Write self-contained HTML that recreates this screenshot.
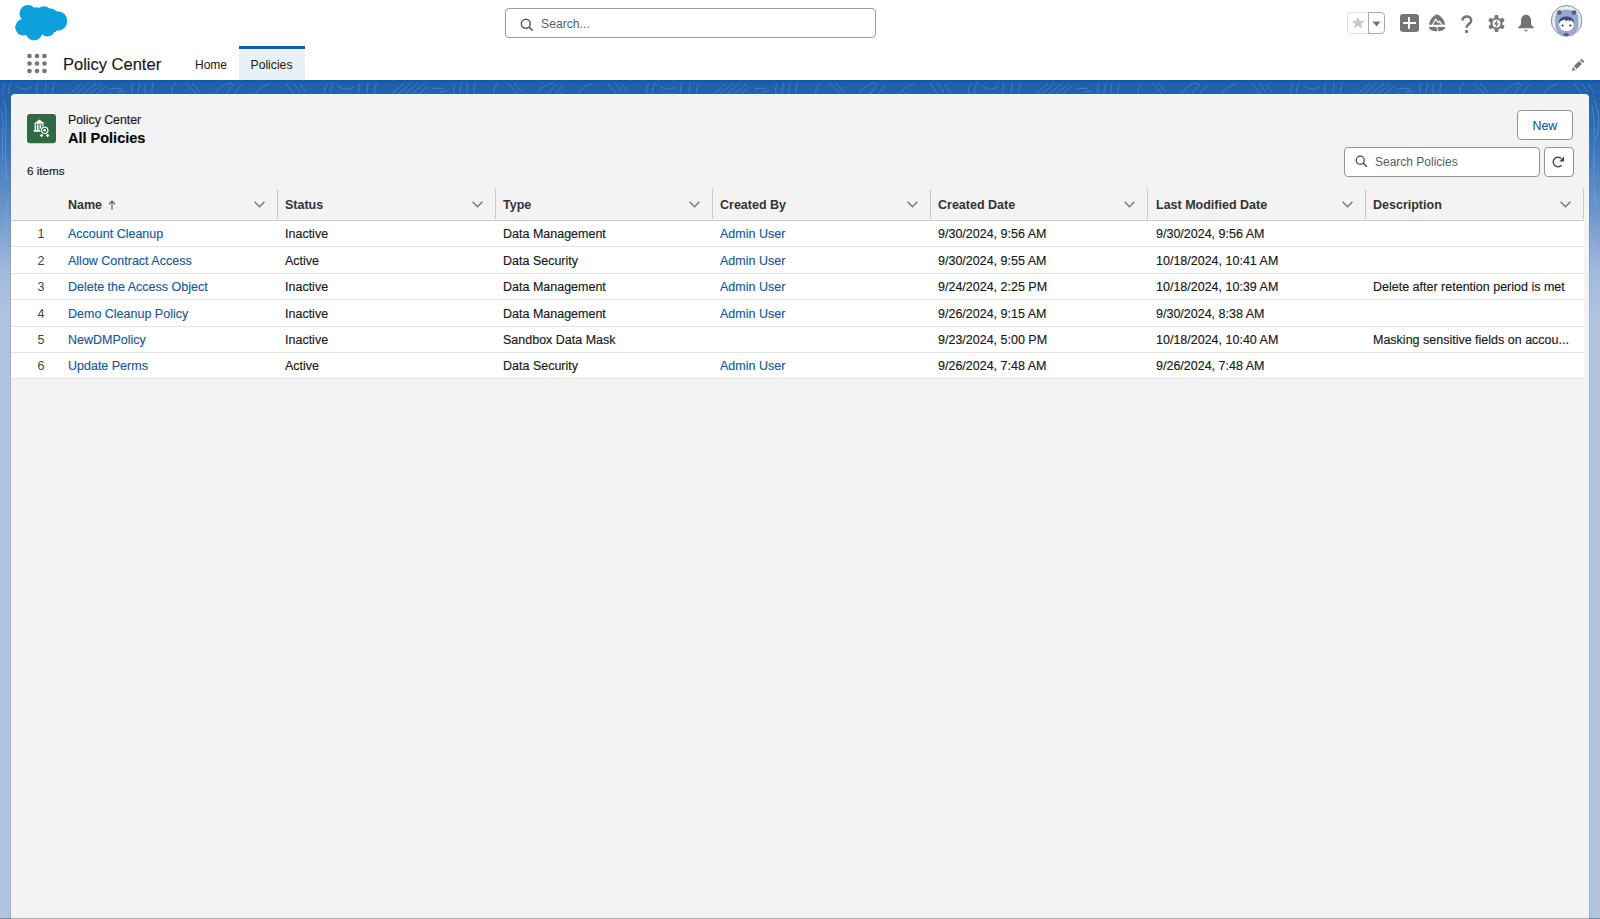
<!DOCTYPE html><html><head><meta charset="utf-8"><style>*{box-sizing:border-box;margin:0;padding:0}
html,body{width:1600px;height:919px;overflow:hidden}
body{font-family:"Liberation Sans",sans-serif;color:#181818;background:#b0c4df;position:relative;font-size:12.5px}
.abs{position:absolute}
#hdr{position:absolute;left:0;top:0;width:1600px;height:80px;background:#fff}
#band{position:absolute;left:0;top:80px;width:1600px;height:839px;background:linear-gradient(180deg,#1d60aa 0px,#2464ac 25px,#3b74b8 65px,#6a95cb 130px,#a0b8da 190px,#b0c4df 235px)}
#band .topline{position:absolute;left:0;top:0;width:1600px;height:2px;background:#0e5cae}
#card{position:absolute;left:11px;top:94px;width:1578px;height:830px;background:#f3f3f3;border-radius:4px 4px 0 0;box-shadow:0 0 0 1px rgba(100,115,130,0.22)}
.t{position:absolute;white-space:nowrap;line-height:13px;height:13px;-webkit-text-stroke:0.15px currentColor}
.link{color:#1a5896}
.cell{color:#181818}
.num{color:#444;text-align:right;-webkit-text-stroke:0}
.ns{-webkit-text-stroke:0}
.hd{font-weight:bold;color:#333;font-size:12.5px;-webkit-text-stroke:0}
.thead{position:absolute;left:11px;top:189px;width:1573px;height:31px;background:#f3f3f3}
.hline{position:absolute;left:11px;top:220px;width:1573px;height:1px;background:#c9c9c9}
.divider{position:absolute;top:189px;width:1px;height:30px;background:#c9c9c9}
.chev{position:absolute}
.sortarrow{position:absolute;left:107.5px;top:200px}
.row{position:absolute;left:11px;width:1573px;height:26.3px;background:#fff;border-bottom:1px solid #e5e5e5}
.box{position:absolute;background:#fff;border:1px solid #939393;border-radius:4px}

#bottomline{position:absolute;left:0;top:918px;width:1600px;height:1px;background:rgba(0,0,0,0.28)}
</style></head><body>
<div id="hdr">
  <!-- cloud logo -->
  <svg class="abs" style="left:0;top:0" width="80" height="46" viewBox="0 0 80 46">
    <g fill="#0da0dc">
      <circle cx="28" cy="13.5" r="8.5"/>
      <circle cx="44" cy="13.5" r="7.3"/>
      <circle cx="57.5" cy="21" r="9.8"/>
      <circle cx="23.5" cy="27.3" r="8.3"/>
      <circle cx="34" cy="32" r="8.5"/>
      <circle cx="47.5" cy="29" r="7.5"/>
      <rect x="22" y="14" width="34" height="18"/><circle cx="36.5" cy="14.5" r="7.2"/><circle cx="50.5" cy="15.5" r="7"/>
    </g>
  </svg>
  <!-- search -->
  <div class="box" style="left:505px;top:8px;width:371px;height:30px;border-color:#9a9a9a"></div>
  <svg class="abs" style="left:520px;top:18px" width="14" height="14" viewBox="0 0 14 14"><circle cx="5.8" cy="5.8" r="4.5" fill="none" stroke="#5c5c5c" stroke-width="1.5"/><path d="M9.1 9.1L12.8 12.8" stroke="#5c5c5c" stroke-width="1.6"/></svg>
  <div class="t ns" style="left:541px;top:18px;font-size:12.2px;color:#5c5c5c">Search...</div>
  <!-- favorites -->
  <div class="abs" style="left:1347px;top:12px;width:22px;height:22px;border:1px solid #e0e0e0;border-right:none;border-radius:4px 0 0 4px;background:#fff"></div>
  <div class="abs" style="left:1368px;top:12px;width:17px;height:22px;border:1px solid #aaa;border-radius:0 4px 4px 0;background:#fff"></div>
  <svg class="abs" style="left:1351px;top:16px" width="14" height="14" viewBox="0 0 14 14"><path d="M7 0.6L8.9 5H13.5L9.8 7.9L11.2 12.6L7 9.8L2.8 12.6L4.2 7.9L0.5 5H5.1Z" fill="#c9c9c9"/></svg>
  <svg class="abs" style="left:1372px;top:21px" width="9" height="6" viewBox="0 0 9 6"><path d="M0.5 0.5H8.5L4.5 5.5Z" fill="#747474"/></svg>
  <!-- plus -->
  <div class="abs" style="left:1400px;top:14px;width:18.5px;height:18px;background:#747474;border-radius:3px"></div>
  <div class="abs" style="left:1403px;top:22.2px;width:12.5px;height:1.7px;background:#fff"></div>
  <div class="abs" style="left:1408.4px;top:16.8px;width:1.7px;height:12.4px;background:#fff"></div>
  <!-- trailhead -->
  <svg class="abs" style="left:1428px;top:14px" width="19" height="18" viewBox="0 0 19 18">
    <path d="M9 0.6C6.3 0.6 1.3 5.8 1 10.8H17C16.7 5.8 11.7 0.6 9 0.6Z" fill="#767676"/>
    <path d="M0.8 13.1H17.3C17.1 15.8 13.5 17.5 9 17.5C4.5 17.5 1 15.8 0.8 13.1Z" fill="#767676"/>
    <path d="M4.3 11.2L7.7 5.3L10.3 8.6L11.6 7.3L14.5 11.2" fill="none" stroke="#fff" stroke-width="1.2"/>
    <path d="M8.4 12.8L9.9 15.2L9.1 17.8" fill="none" stroke="#fff" stroke-width="1"/>
  </svg>
  <!-- help -->
  <svg class="abs" style="left:1460px;top:14.7px" width="14" height="19" viewBox="0 0 14 19"><path d="M2.3 5.4C2.8 3 4.6 1.6 6.9 1.6C9.5 1.6 11.2 3.3 11.2 5.5C11.2 8.1 8.5 8.9 7.3 10.6C6.8 11.3 6.6 12 6.6 12.8" fill="none" stroke="#767676" stroke-width="2.5"/><rect x="5.1" y="15.1" width="3" height="2.8" rx="0.6" fill="#767676"/></svg>
  <!-- gear -->
  <svg class="abs" style="left:1488px;top:15px" width="17" height="17" viewBox="0 0 17 17">
    <g fill="#767676"><circle cx="8.5" cy="8.5" r="6"/>
    <rect x="6.6" y="0" width="3.8" height="4" rx="1"/><rect x="6.6" y="13" width="3.8" height="4" rx="1"/>
    <rect x="6.6" y="0" width="3.8" height="4" rx="1" transform="rotate(60 8.5 8.5)"/><rect x="6.6" y="13" width="3.8" height="4" rx="1" transform="rotate(60 8.5 8.5)"/>
    <rect x="6.6" y="0" width="3.8" height="4" rx="1" transform="rotate(120 8.5 8.5)"/><rect x="6.6" y="13" width="3.8" height="4" rx="1" transform="rotate(120 8.5 8.5)"/></g>
    <circle cx="8.5" cy="8.5" r="3.9" fill="#fff"/>
    <path d="M9.3 5.6L7.1 8.9H9.6L7.8 11.5" fill="none" stroke="#767676" stroke-width="1.3"/>
  </svg>
  <!-- bell -->
  <svg class="abs" style="left:1517px;top:14px" width="18" height="18" viewBox="0 0 18 18"><path d="M9 0.8C5.8 0.8 4 3.3 4 6.5V10.5L1.2 13.2V14.2H16.8V13.2L14 10.5V6.5C14 3.3 12.2 0.8 9 0.8Z" fill="#747474"/><rect x="7.5" y="15.8" width="3" height="1.4" fill="#747474"/></svg>
  <!-- avatar -->
  <svg class="abs" style="left:1550px;top:4px" width="34" height="34" viewBox="0 0 34 34">
    <circle cx="16.6" cy="16.7" r="15.3" fill="#e6eaf5" stroke="#8c9099" stroke-width="1"/>
    <path d="M5.2 14C5.2 8.5 9.5 5.8 16.6 5.8C23.7 5.8 28.4 8.5 28.4 14V20C28.4 26 25 30 21 32.3H12.2C8.2 30 5.2 26 5.2 20Z" fill="#9aa8ca"/>
    <circle cx="9.3" cy="8.6" r="2.3" fill="#4d5d82"/><circle cx="24" cy="8.6" r="2.3" fill="#4d5d82"/>
    <ellipse cx="16.4" cy="20.6" rx="7.4" ry="6.4" fill="#fff"/>
    <path d="M8.8 19.5C8.6 15 11.5 12.4 16.4 12.4C21.3 12.4 24.2 15 24 19.5C23 17.5 22 16.5 20.5 16.2L19.5 17.8L18.2 15.8L16 17.5L15 15.5C12.5 16 10 17 8.8 19.5Z" fill="#3a4b72"/>
    <circle cx="12.6" cy="21.4" r="1" fill="#222"/><circle cx="20.4" cy="21.4" r="1" fill="#222"/>
    <ellipse cx="16.2" cy="30.6" rx="2.8" ry="1.7" fill="#4d5d82"/>
  </svg>
  <!-- nav row -->
  <svg class="abs" style="left:26px;top:53px" width="22" height="22" viewBox="0 0 22 22"><g fill="#747474">
    <circle cx="3.5" cy="3" r="2.3"/><circle cx="11" cy="3" r="2.3"/><circle cx="18.5" cy="3" r="2.3"/>
    <circle cx="3.5" cy="10.5" r="2.3"/><circle cx="11" cy="10.5" r="2.3"/><circle cx="18.5" cy="10.5" r="2.3"/>
    <circle cx="3.5" cy="18" r="2.3"/><circle cx="11" cy="18" r="2.3"/><circle cx="18.5" cy="18" r="2.3"/></g></svg>
  <div class="t" style="left:63px;top:56px;font-size:16.5px;line-height:17px;height:17px;color:#181818">Policy Center</div>
  <div class="t ns" style="left:195px;top:58.5px;font-size:12px;color:#181818">Home</div>
  <div class="abs" style="left:238.5px;top:46px;width:66px;height:34px;background:#eaf0f8;border-top:3px solid #0b5cab"></div>
  <div class="t ns" style="left:250.5px;top:58.5px;font-size:12.2px;color:#181818">Policies</div>
  <svg class="abs" style="left:1571px;top:58px" width="14" height="14" viewBox="0 0 14 14"><g fill="#747474"><path d="M0.9 12.9L1.9 9.1L4.8 12Z"/><path d="M2.8 8.2L8 3L10.9 5.9L5.7 11.1Z"/><path d="M8.9 2.1L10.3 0.7L13.2 3.6L11.8 5Z"/></g></svg>
</div>
<div id="band"><div class="topline"></div>
<svg style="position:absolute;left:0;top:0" width="1600" height="320" viewBox="0 0 1600 320" fill="none" stroke="#9cc0ee" stroke-opacity="0.3" stroke-width="1">
<g transform="translate(0 0)">
<path d="M3 14C2 10 3 6 6 3M9 14C8 10 9 6 12 2"/>
<path d="M15 5C20 10 26 10 32 7"/>
<path d="M37 14C36 10 37 6 38 3M45 14C45 10 46 6 46 3M53 14C52 10 53 6 55 3"/>
<path d="M70 14L82 3M76 14L89 3M83 14L96 3M90 14L102 4M97 14L106 6"/>
<path d="M110 9C114 8 118 8 122 9M118 12L125 11"/>
<path d="M132 14C131 10 132 6 133 3M138 14C138 10 139 6 140 3M145 14C145 10 145 6 146 3M152 14C152 10 152 6 153 3"/>
<path d="M172 14C171 10 173 6 176 3"/>
<path d="M186 3L196 14M192 3L200 12"/>
<path d="M215 14C218 8 224 4 232 3M226 14L234 4M234 14L241 5"/>
<path d="M256 14C258 10 262 6 270 4"/>
<path d="M286 3L294 14M293 3L300 12M300 4L306 12"/>
</g><g transform="translate(322 0)">
<path d="M3 14C2 10 3 6 6 3M9 14C8 10 9 6 12 2"/>
<path d="M15 5C20 10 26 10 32 7"/>
<path d="M37 14C36 10 37 6 38 3M45 14C45 10 46 6 46 3M53 14C52 10 53 6 55 3"/>
<path d="M70 14L82 3M76 14L89 3M83 14L96 3M90 14L102 4M97 14L106 6"/>
<path d="M110 9C114 8 118 8 122 9M118 12L125 11"/>
<path d="M132 14C131 10 132 6 133 3M138 14C138 10 139 6 140 3M145 14C145 10 145 6 146 3M152 14C152 10 152 6 153 3"/>
<path d="M172 14C171 10 173 6 176 3"/>
<path d="M186 3L196 14M192 3L200 12"/>
<path d="M215 14C218 8 224 4 232 3M226 14L234 4M234 14L241 5"/>
<path d="M256 14C258 10 262 6 270 4"/>
<path d="M286 3L294 14M293 3L300 12M300 4L306 12"/>
</g><g transform="translate(644 0)">
<path d="M3 14C2 10 3 6 6 3M9 14C8 10 9 6 12 2"/>
<path d="M15 5C20 10 26 10 32 7"/>
<path d="M37 14C36 10 37 6 38 3M45 14C45 10 46 6 46 3M53 14C52 10 53 6 55 3"/>
<path d="M70 14L82 3M76 14L89 3M83 14L96 3M90 14L102 4M97 14L106 6"/>
<path d="M110 9C114 8 118 8 122 9M118 12L125 11"/>
<path d="M132 14C131 10 132 6 133 3M138 14C138 10 139 6 140 3M145 14C145 10 145 6 146 3M152 14C152 10 152 6 153 3"/>
<path d="M172 14C171 10 173 6 176 3"/>
<path d="M186 3L196 14M192 3L200 12"/>
<path d="M215 14C218 8 224 4 232 3M226 14L234 4M234 14L241 5"/>
<path d="M256 14C258 10 262 6 270 4"/>
<path d="M286 3L294 14M293 3L300 12M300 4L306 12"/>
</g><g transform="translate(966 0)">
<path d="M3 14C2 10 3 6 6 3M9 14C8 10 9 6 12 2"/>
<path d="M15 5C20 10 26 10 32 7"/>
<path d="M37 14C36 10 37 6 38 3M45 14C45 10 46 6 46 3M53 14C52 10 53 6 55 3"/>
<path d="M70 14L82 3M76 14L89 3M83 14L96 3M90 14L102 4M97 14L106 6"/>
<path d="M110 9C114 8 118 8 122 9M118 12L125 11"/>
<path d="M132 14C131 10 132 6 133 3M138 14C138 10 139 6 140 3M145 14C145 10 145 6 146 3M152 14C152 10 152 6 153 3"/>
<path d="M172 14C171 10 173 6 176 3"/>
<path d="M186 3L196 14M192 3L200 12"/>
<path d="M215 14C218 8 224 4 232 3M226 14L234 4M234 14L241 5"/>
<path d="M256 14C258 10 262 6 270 4"/>
<path d="M286 3L294 14M293 3L300 12M300 4L306 12"/>
</g><g transform="translate(1288 0)">
<path d="M3 14C2 10 3 6 6 3M9 14C8 10 9 6 12 2"/>
<path d="M15 5C20 10 26 10 32 7"/>
<path d="M37 14C36 10 37 6 38 3M45 14C45 10 46 6 46 3M53 14C52 10 53 6 55 3"/>
<path d="M70 14L82 3M76 14L89 3M83 14L96 3M90 14L102 4M97 14L106 6"/>
<path d="M110 9C114 8 118 8 122 9M118 12L125 11"/>
<path d="M132 14C131 10 132 6 133 3M138 14C138 10 139 6 140 3M145 14C145 10 145 6 146 3M152 14C152 10 152 6 153 3"/>
<path d="M172 14C171 10 173 6 176 3"/>
<path d="M186 3L196 14M192 3L200 12"/>
<path d="M215 14C218 8 224 4 232 3M226 14L234 4M234 14L241 5"/>
<path d="M256 14C258 10 262 6 270 4"/>
<path d="M286 3L294 14M293 3L300 12M300 4L306 12"/>
</g>

<path d="M4 20C9 40 3 70 7 100M8 120C2 150 10 180 5 220M1 30C5 40 1 60 3 80M1592 25C1598 55 1590 95 1596 125M1590 150C1598 180 1592 215 1598 250M1594 20C1600 35 1600 45 1596 60"/>
</svg></div>
<div id="card"></div>
<!-- card header -->
<svg class="abs" style="left:27px;top:114px" width="30" height="30" viewBox="0 0 30 30">
  <rect x="0" y="0" width="29" height="29.3" rx="3.2" fill="#306a42"/>
  <g fill="#fff">
    <path d="M6.8 9.7L12.3 5.5L17.9 9.7Z"/>
    <rect x="7.6" y="10.4" width="1.5" height="5.6"/><rect x="10.1" y="10.4" width="1.5" height="5.6"/><rect x="12.6" y="10.4" width="1.5" height="5.6"/><rect x="15.1" y="10.4" width="1.4" height="4.6"/>
    <rect x="6.8" y="16" width="8.4" height="1.8"/>
  </g>
  <circle cx="17.7" cy="16.3" r="4.6" fill="#306a42"/>
  <circle cx="17.7" cy="16.3" r="3.2" fill="none" stroke="#fff" stroke-width="1.2"/>
  <circle cx="17.7" cy="16.3" r="1.3" fill="#fff"/>
  <path d="M14.6 19.8L16.4 21.5L14.6 23.2L12.9 21.5Z M20.6 19.8L22.4 21.5L20.6 23.2L18.9 21.5Z" fill="#fff"/>
</svg>
<div class="t" style="left:68px;top:114px;font-size:12.3px;color:#181818">Policy Center</div>
<div class="t" style="left:68px;top:131px;font-size:14.5px;line-height:15px;height:15px;font-weight:bold;color:#030303">All Policies</div>
<div class="t" style="left:27px;top:164px;font-size:11.7px;color:#181818">6 items</div>
<!-- New button -->
<div class="box" style="left:1517px;top:110px;width:56px;height:30px;border-color:#949494"></div>
<div class="t" style="left:1532.5px;top:120px;font-size:12.3px;color:#1a5c9a">New</div>
<!-- search policies -->
<div class="box" style="left:1344px;top:147px;width:196px;height:30px;border-color:#949494"></div>
<svg class="abs" style="left:1355px;top:155px" width="13" height="13" viewBox="0 0 13 13"><circle cx="5.2" cy="5.2" r="4" fill="none" stroke="#444" stroke-width="1.3"/><path d="M8.1 8.1L11.8 11.8" stroke="#444" stroke-width="1.4"/></svg>
<div class="t ns" style="left:1375px;top:156px;font-size:12px;color:#5c5c5c">Search Policies</div>
<div class="box" style="left:1544px;top:147px;width:29.5px;height:30px;border-color:#949494"></div>
<svg class="abs" style="left:1552px;top:156px" width="14" height="13" viewBox="0 0 14 13"><path d="M9.6 9.2A4.8 4.8 0 1 1 9.4 2.6" fill="none" stroke="#444" stroke-width="1.4"/><path d="M12 0.6V5.4H7.2Z" fill="#444"/></svg>

<div class="thead"></div>
<div class="t hd" style="left:68px;top:199px">Name</div><svg class="sortarrow" width="8" height="10" viewBox="0 0 8 10"><path d="M4 9.5V1.2M0.9 4.2L4 1.1L7.1 4.2" fill="none" stroke="#5c5c5c" stroke-width="1.2"/></svg>
<svg class="chev" style="left:254px;top:201px" width="11" height="7" viewBox="0 0 11 7"><path d="M0.6 0.8L5.5 5.8L10.4 0.8" fill="none" stroke="#747474" stroke-width="1.3"/></svg>
<div class="divider" style="left:276.5px"></div>
<div class="t hd" style="left:285px;top:199px">Status</div>
<svg class="chev" style="left:472px;top:201px" width="11" height="7" viewBox="0 0 11 7"><path d="M0.6 0.8L5.5 5.8L10.4 0.8" fill="none" stroke="#747474" stroke-width="1.3"/></svg>
<div class="divider" style="left:494.5px"></div>
<div class="t hd" style="left:503px;top:199px">Type</div>
<svg class="chev" style="left:689px;top:201px" width="11" height="7" viewBox="0 0 11 7"><path d="M0.6 0.8L5.5 5.8L10.4 0.8" fill="none" stroke="#747474" stroke-width="1.3"/></svg>
<div class="divider" style="left:711.5px"></div>
<div class="t hd" style="left:720px;top:199px">Created By</div>
<svg class="chev" style="left:907px;top:201px" width="11" height="7" viewBox="0 0 11 7"><path d="M0.6 0.8L5.5 5.8L10.4 0.8" fill="none" stroke="#747474" stroke-width="1.3"/></svg>
<div class="divider" style="left:929.5px"></div>
<div class="t hd" style="left:938px;top:199px">Created Date</div>
<svg class="chev" style="left:1124px;top:201px" width="11" height="7" viewBox="0 0 11 7"><path d="M0.6 0.8L5.5 5.8L10.4 0.8" fill="none" stroke="#747474" stroke-width="1.3"/></svg>
<div class="divider" style="left:1146.5px"></div>
<div class="t hd" style="left:1156px;top:199px">Last Modified Date</div>
<svg class="chev" style="left:1342px;top:201px" width="11" height="7" viewBox="0 0 11 7"><path d="M0.6 0.8L5.5 5.8L10.4 0.8" fill="none" stroke="#747474" stroke-width="1.3"/></svg>
<div class="divider" style="left:1364.5px"></div>
<div class="t hd" style="left:1373px;top:199px">Description</div>
<svg class="chev" style="left:1560px;top:201px" width="11" height="7" viewBox="0 0 11 7"><path d="M0.6 0.8L5.5 5.8L10.4 0.8" fill="none" stroke="#747474" stroke-width="1.3"/></svg>
<div class="divider" style="left:1582.5px"></div>
<div class="hline"></div>
<div class="row" style="top:221px;height:26px"></div>
<div class="t num" style="left:30px;width:14.5px;top:228px">1</div>
<div class="t link" style="left:68px;top:228px">Account Cleanup</div>
<div class="t cell" style="left:285px;top:228px">Inactive</div>
<div class="t cell" style="left:503px;top:228px">Data Management</div>
<div class="t link" style="left:720px;top:228px">Admin User</div>
<div class="t cell" style="left:938px;top:228px">9/30/2024, 9:56 AM</div>
<div class="t cell" style="left:1156px;top:228px">9/30/2024, 9:56 AM</div>
<div class="row" style="top:247px;height:27px"></div>
<div class="t num" style="left:30px;width:14.5px;top:255px">2</div>
<div class="t link" style="left:68px;top:255px">Allow Contract Access</div>
<div class="t cell" style="left:285px;top:255px">Active</div>
<div class="t cell" style="left:503px;top:255px">Data Security</div>
<div class="t link" style="left:720px;top:255px">Admin User</div>
<div class="t cell" style="left:938px;top:255px">9/30/2024, 9:55 AM</div>
<div class="t cell" style="left:1156px;top:255px">10/18/2024, 10:41 AM</div>
<div class="row" style="top:274px;height:26px"></div>
<div class="t num" style="left:30px;width:14.5px;top:281px">3</div>
<div class="t link" style="left:68px;top:281px">Delete the Access Object</div>
<div class="t cell" style="left:285px;top:281px">Inactive</div>
<div class="t cell" style="left:503px;top:281px">Data Management</div>
<div class="t link" style="left:720px;top:281px">Admin User</div>
<div class="t cell" style="left:938px;top:281px">9/24/2024, 2:25 PM</div>
<div class="t cell" style="left:1156px;top:281px">10/18/2024, 10:39 AM</div>
<div class="t cell" style="left:1373px;top:281px">Delete after retention period is met</div>
<div class="row" style="top:300px;height:27px"></div>
<div class="t num" style="left:30px;width:14.5px;top:307.5px">4</div>
<div class="t link" style="left:68px;top:307.5px">Demo Cleanup Policy</div>
<div class="t cell" style="left:285px;top:307.5px">Inactive</div>
<div class="t cell" style="left:503px;top:307.5px">Data Management</div>
<div class="t link" style="left:720px;top:307.5px">Admin User</div>
<div class="t cell" style="left:938px;top:307.5px">9/26/2024, 9:15 AM</div>
<div class="t cell" style="left:1156px;top:307.5px">9/30/2024, 8:38 AM</div>
<div class="row" style="top:327px;height:26px"></div>
<div class="t num" style="left:30px;width:14.5px;top:334px">5</div>
<div class="t link" style="left:68px;top:334px">NewDMPolicy</div>
<div class="t cell" style="left:285px;top:334px">Inactive</div>
<div class="t cell" style="left:503px;top:334px">Sandbox Data Mask</div>
<div class="t cell" style="left:938px;top:334px">9/23/2024, 5:00 PM</div>
<div class="t cell" style="left:1156px;top:334px">10/18/2024, 10:40 AM</div>
<div class="t cell" style="left:1373px;top:334px">Masking sensitive fields on accou...</div>
<div class="row" style="top:353px;height:26px"></div>
<div class="t num" style="left:30px;width:14.5px;top:360px">6</div>
<div class="t link" style="left:68px;top:360px">Update Perms</div>
<div class="t cell" style="left:285px;top:360px">Active</div>
<div class="t cell" style="left:503px;top:360px">Data Security</div>
<div class="t link" style="left:720px;top:360px">Admin User</div>
<div class="t cell" style="left:938px;top:360px">9/26/2024, 7:48 AM</div>
<div class="t cell" style="left:1156px;top:360px">9/26/2024, 7:48 AM</div>
<div id="bottomline"></div></body></html>
